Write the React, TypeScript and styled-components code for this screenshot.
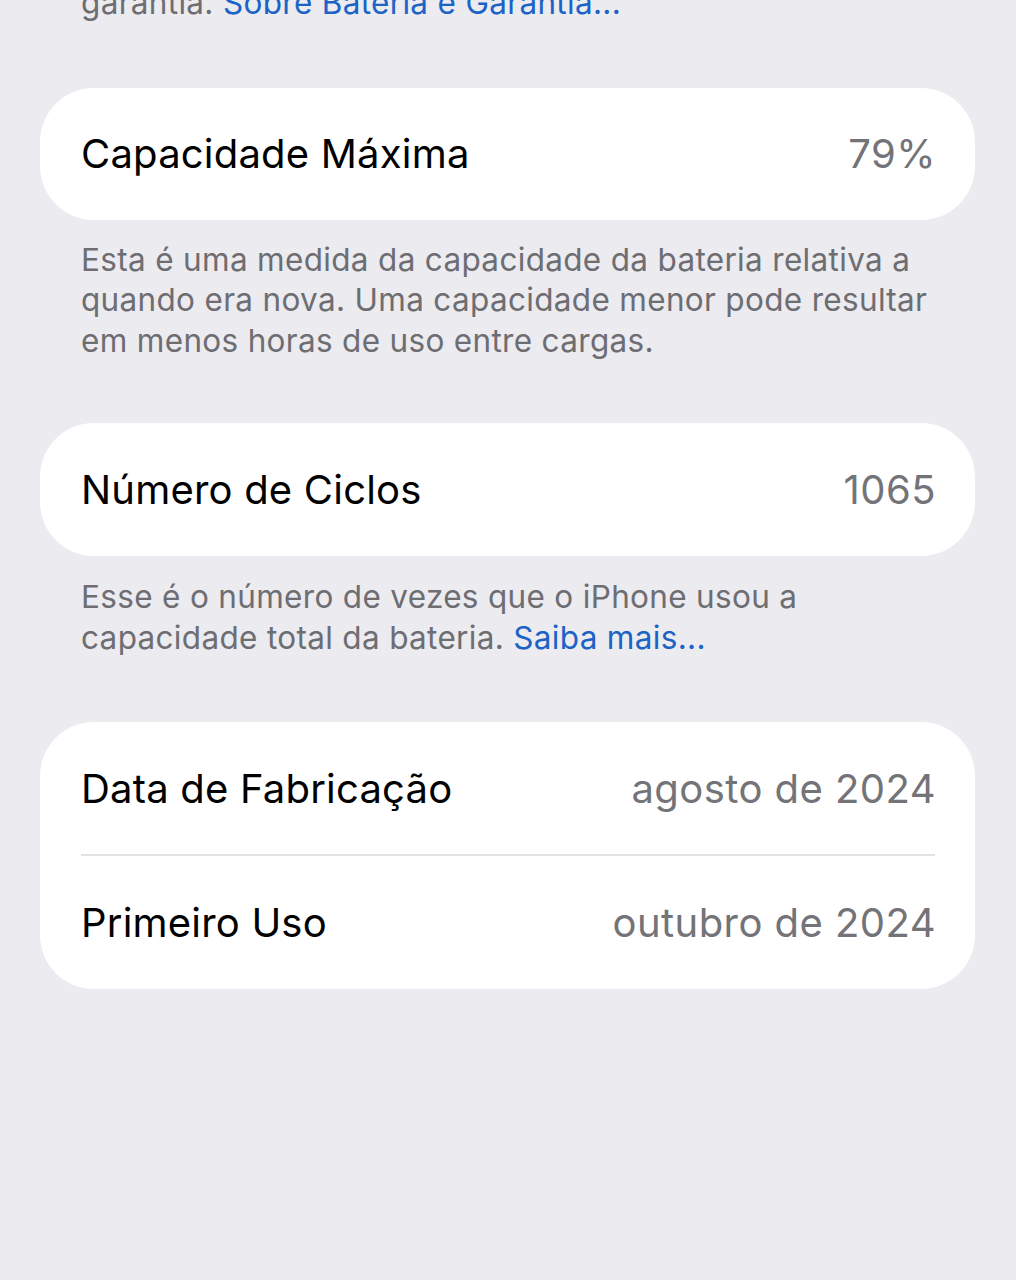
import React from "react";
import styled, { createGlobalStyle } from "styled-components";

const Global = createGlobalStyle`
  html, body { margin: 0; padding: 0; background: #ebebf0; }
  body { font-family: Inter, "Noto Sans", "Liberation Sans", sans-serif; -webkit-font-smoothing: antialiased; }
`;

const Page = styled.div`
  min-height: 1280px;
  background: #ebebf0;
  padding: 0 41px 0 40px;
  box-sizing: border-box;
  overflow: hidden;
  display: flex;
  flex-direction: column;
`;

const Footer = styled.p<{ $top?: number; $bottom: number }>`
  margin: ${(p) => p.$top ?? 0}px 0 ${(p) => p.$bottom}px 0;
  padding: 0 30px 0 41px;
  font-size: 31.5px;
  line-height: 40.5px;
  color: #6d6d72;
  letter-spacing: 0.32px;
`;

const Link = styled.span`
  color: #1b63c6;
`;

const Card = styled.div`
  background: #ffffff;
  border-radius: 54px;
  display: flex;
  flex-direction: column;
  padding: 0 39px 0 41px;
`;

const Row = styled.div<{ $h: number }>`
  height: ${(p) => p.$h}px;
  display: flex;
  align-items: center;
  justify-content: space-between;
`;

const Divider = styled.div`
  height: 2px;
  margin-right: 1px;
  background: #e3e3e7;
`;

const Label = styled.span`
  font-size: 40px;
  color: #000;
  letter-spacing: 0.2px;
`;

const Value = styled.span`
  font-size: 40px;
  color: #737378;
  letter-spacing: 0.45px;
`;

export default function App() {
  return (
    <>
      <Global />
      <Page>
        <Footer $top={-17} $bottom={64}>
          garantia. <Link>Sobre Bateria e Garantia...</Link>
        </Footer>
        <Card>
          <Row $h={132}>
            <Label>Capacidade Máxima</Label>
            <Value>79%</Value>
          </Row>
        </Card>
        <Footer $top={20} $bottom={62}>
          Esta é uma medida da capacidade da bateria relativa a quando era nova. Uma capacidade menor pode resultar em menos horas de uso entre cargas.
        </Footer>
        <Card>
          <Row $h={133}>
            <Label>Número de Ciclos</Label>
            <Value>1065</Value>
          </Row>
        </Card>
        <Footer $top={21} $bottom={64}>
          Esse é o número de vezes que o iPhone usou a capacidade total da bateria. <Link>Saiba mais...</Link>
        </Footer>
        <Card>
          <Row $h={132}>
            <Label>Data de Fabricação</Label>
            <Value>agosto de 2024</Value>
          </Row>
          <Divider />
          <Row $h={133}>
            <Label>Primeiro Uso</Label>
            <Value>outubro de 2024</Value>
          </Row>
        </Card>
      </Page>
    </>
  );
}
